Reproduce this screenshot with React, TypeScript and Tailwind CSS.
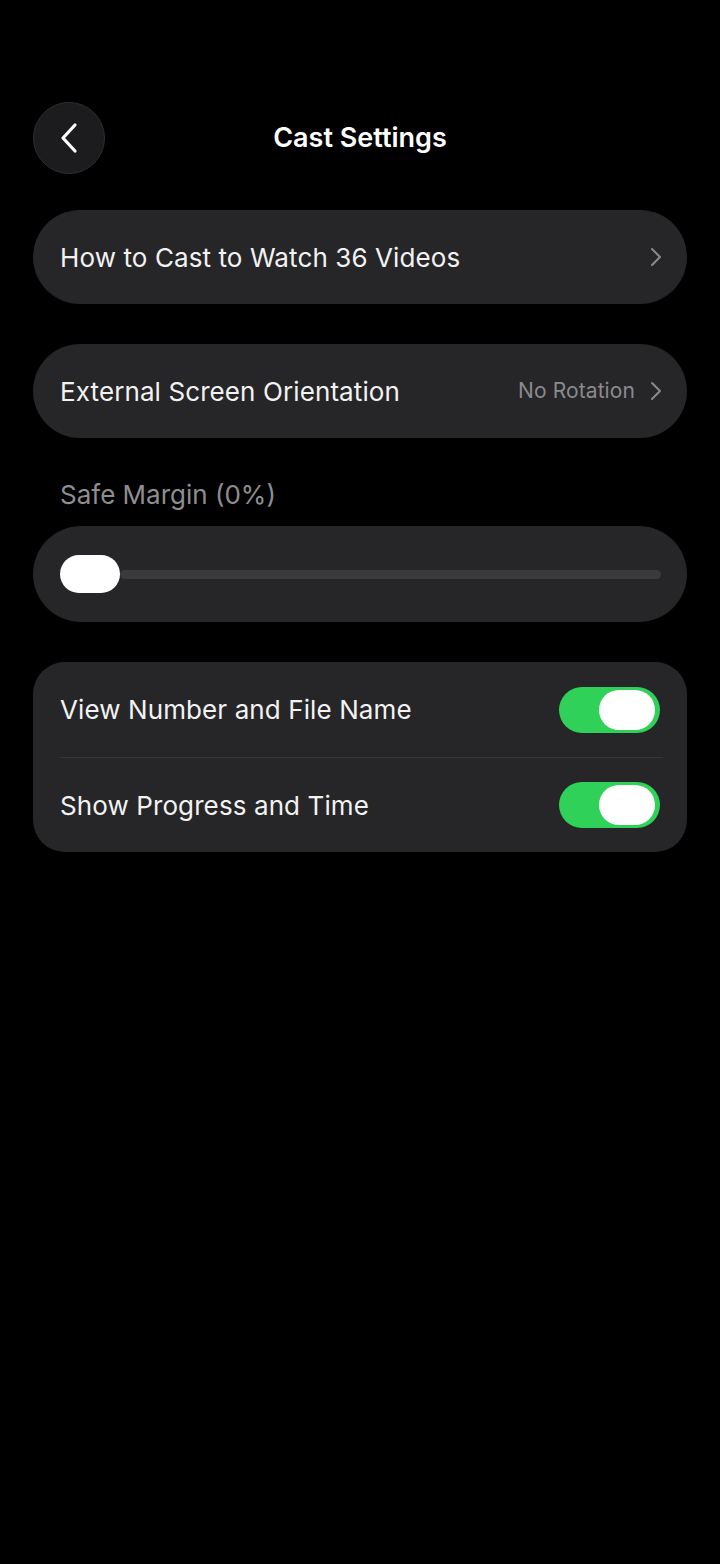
import React from "react";

const font = { fontFamily: "Inter, 'Noto Sans', sans-serif" };

function Chevron() {
  return (
    <svg width="14" height="20" viewBox="0 0 14 20" fill="none">
      <path d="M3 2 L11 10 L3 18" stroke="#8a8a8d" strokeWidth="2" strokeLinecap="round" strokeLinejoin="round" />
    </svg>
  );
}

function Toggle() {
  return (
    <div className="w-[101px] h-[46px] rounded-full bg-[#30d158] flex items-center justify-end pr-[5px]">
      <div className="w-[56px] h-[40px] rounded-full bg-white" />
    </div>
  );
}

export default function App() {
  return (
    <div className="min-h-[1564px] w-[720px] bg-black text-white" style={font}>
      <div className="px-[33px] pt-[102px]">
        <div className="relative h-[72px] flex items-center justify-center">
          <div className="absolute left-0 top-0 w-[72px] h-[72px] rounded-full bg-[#1c1c1e] border border-[#2e2e30] flex items-center justify-center">
            <svg width="22" height="32" viewBox="0 0 22 32" fill="none">
              <path d="M17 3 L5 16 L17 29" stroke="white" strokeWidth="3.2" strokeLinecap="round" strokeLinejoin="round" />
            </svg>
          </div>
          <div className="text-[27px] font-semibold">Cast Settings</div>
        </div>

        <div className="mt-[36px] h-[94px] rounded-full bg-[#262628] flex items-center justify-between pl-[27px] pr-[24px]">
          <span className="text-[26px] tracking-[0.1px] text-[#f2f2f2]">How to Cast to Watch 36 Videos</span>
          <Chevron />
        </div>

        <div className="mt-[40px] h-[94px] rounded-full bg-[#262628] flex items-center justify-between pl-[27px] pr-[24px]">
          <span className="text-[26px] tracking-[0.1px] text-[#f2f2f2]">External Screen Orientation</span>
          <div className="flex items-center gap-[14px]">
            <span className="text-[21px] text-[#8a8a8d] tracking-[0.1px]">No Rotation</span>
            <Chevron />
          </div>
        </div>

        <div className="mt-[40px] pl-[27px] h-[34px] leading-[34px] text-[26px] text-[#8e8e90]">
          Safe Margin (0%)
        </div>

        <div className="mt-[14px] h-[96px] rounded-full bg-[#262628] flex items-center pl-[27px] pr-[26px]">
          <div className="flex-1 flex items-center">
            <div className="w-[60px] h-[38px] rounded-full bg-white shrink-0" />
            <div className="flex-1 h-[9px] rounded-full bg-[#3a3a3c]" />
          </div>
        </div>

        <div className="mt-[40px] rounded-[32px] bg-[#262628] pl-[27px] pr-[27px]">
          <div className="h-[95px] flex items-center justify-between">
            <span className="text-[26px] tracking-[0.1px] text-[#f2f2f2]">View Number and File Name</span>
            <Toggle />
          </div>
          <div className="h-px bg-[#363638] mr-[-3px]" />
          <div className="h-[94px] flex items-center justify-between">
            <span className="text-[26px] tracking-[0.1px] text-[#f2f2f2]">Show Progress and Time</span>
            <Toggle />
          </div>
        </div>
      </div>
    </div>
  );
}
